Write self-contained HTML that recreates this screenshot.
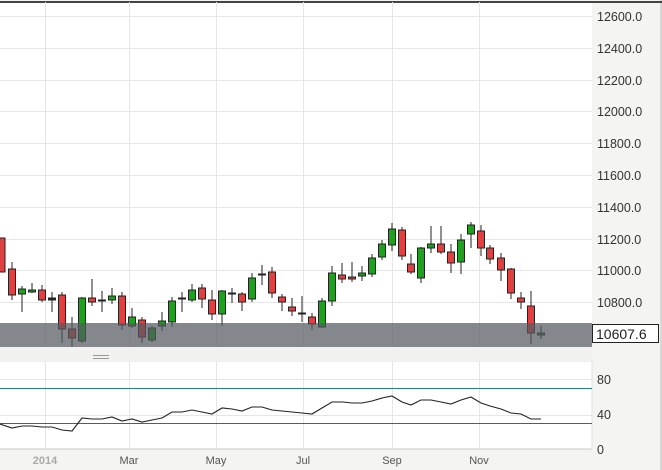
<!DOCTYPE html><html><head><meta charset="utf-8"><style>
html,body{margin:0;padding:0;background:#f4f4f2;width:662px;height:470px;overflow:hidden;font-family:"Liberation Sans",sans-serif}
svg{display:block}
</style></head><body>
<svg width="662" height="470" xmlns="http://www.w3.org/2000/svg" font-family="Liberation Sans, sans-serif">
<rect x="0" y="0" width="662" height="470" fill="#f4f4f2"/>
<rect x="660" y="0" width="2" height="470" fill="#d8d8d6"/>
<rect x="0" y="2" width="592" height="345" fill="#fff"/>
<rect x="0" y="1" width="662" height="2" fill="#444"/>
<rect x="0" y="361" width="592" height="88" fill="#fff"/>
<line x1="0" y1="449" x2="592" y2="449" stroke="#c8c8c8"/>
<line x1="0" y1="361" x2="592" y2="361" stroke="#e2e2e2"/>
<line x1="592" y1="361" x2="592" y2="449" stroke="#e2e2e2"/>
<g stroke="#e6e6e6" stroke-width="1">
<line x1="0" y1="16.5" x2="592" y2="16.5"/><line x1="0" y1="48.5" x2="592" y2="48.5"/><line x1="0" y1="80.5" x2="592" y2="80.5"/><line x1="0" y1="111.5" x2="592" y2="111.5"/><line x1="0" y1="143.5" x2="592" y2="143.5"/><line x1="0" y1="175.5" x2="592" y2="175.5"/><line x1="0" y1="207.5" x2="592" y2="207.5"/><line x1="0" y1="239.5" x2="592" y2="239.5"/><line x1="0" y1="270.5" x2="592" y2="270.5"/><line x1="0" y1="302.5" x2="592" y2="302.5"/>
<line x1="0" y1="415.5" x2="592" y2="415.5"/><line x1="0" y1="379.5" x2="592" y2="379.5"/>
<line x1="45.5" y1="2" x2="45.5" y2="347"/><line x1="129.5" y1="2" x2="129.5" y2="347"/><line x1="216.5" y1="2" x2="216.5" y2="347"/><line x1="303.5" y1="2" x2="303.5" y2="347"/><line x1="392.5" y1="2" x2="392.5" y2="347"/><line x1="479.5" y1="2" x2="479.5" y2="347"/>
<line x1="45.5" y1="361" x2="45.5" y2="449"/><line x1="129.5" y1="361" x2="129.5" y2="449"/><line x1="216.5" y1="361" x2="216.5" y2="449"/><line x1="303.5" y1="361" x2="303.5" y2="449"/><line x1="392.5" y1="361" x2="392.5" y2="449"/><line x1="479.5" y1="361" x2="479.5" y2="449"/>
</g>
<g stroke="#222" stroke-width="1">
<line x1="12" y1="262" x2="12" y2="300"/><line x1="22" y1="286" x2="22" y2="312"/><line x1="32" y1="283" x2="32" y2="293"/><line x1="42" y1="285" x2="42" y2="302"/><line x1="52" y1="292" x2="52" y2="312"/><line x1="62" y1="292" x2="62" y2="343"/><line x1="72" y1="317" x2="72" y2="351"/><line x1="82" y1="297" x2="82" y2="343"/><line x1="92" y1="279" x2="92" y2="306"/><line x1="102" y1="291" x2="102" y2="312"/><line x1="112" y1="288" x2="112" y2="304"/><line x1="122" y1="292" x2="122" y2="330"/><line x1="132" y1="308" x2="132" y2="328"/><line x1="142" y1="317" x2="142" y2="343"/><line x1="152" y1="326" x2="152" y2="342"/><line x1="162" y1="312" x2="162" y2="331"/><line x1="172" y1="297" x2="172" y2="327"/><line x1="182" y1="292" x2="182" y2="312"/><line x1="192" y1="284" x2="192" y2="302"/><line x1="202" y1="284" x2="202" y2="308"/><line x1="212" y1="290" x2="212" y2="320"/><line x1="222" y1="290" x2="222" y2="326"/><line x1="232" y1="288" x2="232" y2="303"/><line x1="242" y1="292" x2="242" y2="311"/><line x1="252" y1="273" x2="252" y2="302"/><line x1="262" y1="265" x2="262" y2="285"/><line x1="272" y1="267" x2="272" y2="298"/><line x1="282" y1="294" x2="282" y2="311"/><line x1="292" y1="298" x2="292" y2="316"/><line x1="302" y1="296" x2="302" y2="322"/><line x1="312" y1="313" x2="312" y2="330"/><line x1="322" y1="298" x2="322" y2="328"/><line x1="332" y1="266" x2="332" y2="306"/><line x1="342" y1="263" x2="342" y2="283"/><line x1="352" y1="262" x2="352" y2="282"/><line x1="362" y1="266" x2="362" y2="281"/><line x1="372" y1="254" x2="372" y2="277"/><line x1="382" y1="240" x2="382" y2="260"/><line x1="392" y1="223" x2="392" y2="251"/><line x1="402" y1="227" x2="402" y2="260"/><line x1="411" y1="254" x2="411" y2="274"/><line x1="421" y1="247" x2="421" y2="283"/><line x1="431" y1="226" x2="431" y2="253"/><line x1="441" y1="226" x2="441" y2="254"/><line x1="451" y1="244" x2="451" y2="273"/><line x1="461" y1="234" x2="461" y2="274"/><line x1="471" y1="222" x2="471" y2="248"/><line x1="481" y1="225" x2="481" y2="256"/><line x1="490" y1="245" x2="490" y2="264"/><line x1="501" y1="253" x2="501" y2="281"/><line x1="511" y1="268" x2="511" y2="299"/><line x1="521" y1="292" x2="521" y2="309"/><line x1="531" y1="291" x2="531" y2="344"/><line x1="541" y1="326" x2="541" y2="339"/>
</g>
<g stroke="#222" stroke-width="1">
<rect x="-2" y="238" width="7" height="34" fill="#e04040"/>
<rect x="8.5" y="269" width="7" height="26" fill="#e04040"/>
<rect x="18.5" y="289" width="7" height="5" fill="#1fa01f"/>
<rect x="28.5" y="290" width="7" height="2" fill="#1fa01f"/>
<rect x="38.5" y="290" width="7" height="10" fill="#e04040"/>
<rect x="48.5" y="298" width="7" height="2" fill="#222"/>
<rect x="58.5" y="295" width="7" height="34" fill="#e04040"/>
<rect x="68.5" y="329" width="7" height="9" fill="#e04040"/>
<rect x="78.5" y="298" width="7" height="43" fill="#1fa01f"/>
<rect x="88.5" y="298" width="7" height="4" fill="#e04040"/>
<rect x="98.5" y="300" width="7" height="1" fill="#222"/>
<rect x="108.5" y="296" width="7" height="4" fill="#1fa01f"/>
<rect x="118.5" y="296" width="7" height="29" fill="#e04040"/>
<rect x="128.5" y="317" width="7" height="9" fill="#1fa01f"/>
<rect x="138.5" y="320" width="7" height="17" fill="#e04040"/>
<rect x="148.5" y="328" width="7" height="12" fill="#1fa01f"/>
<rect x="158.5" y="321" width="7" height="5" fill="#1fa01f"/>
<rect x="168.5" y="301" width="7" height="21" fill="#1fa01f"/>
<rect x="178.5" y="298" width="7" height="1" fill="#222"/>
<rect x="188.5" y="290" width="7" height="10" fill="#1fa01f"/>
<rect x="198.5" y="288" width="7" height="11" fill="#e04040"/>
<rect x="208.5" y="300" width="7" height="14" fill="#e04040"/>
<rect x="218.5" y="291" width="7" height="23" fill="#1fa01f"/>
<rect x="228.5" y="293" width="7" height="1" fill="#222"/>
<rect x="238.5" y="294" width="7" height="8" fill="#e04040"/>
<rect x="248.5" y="278" width="7" height="21" fill="#1fa01f"/>
<rect x="258.5" y="274" width="7" height="1" fill="#222"/>
<rect x="268.5" y="272" width="7" height="21" fill="#e04040"/>
<rect x="278.5" y="297" width="7" height="5" fill="#e04040"/>
<rect x="288.5" y="307" width="7" height="4" fill="#e04040"/>
<rect x="298.5" y="313" width="7" height="1" fill="#e04040"/>
<rect x="308.5" y="317" width="7" height="7" fill="#e04040"/>
<rect x="318.5" y="301" width="7" height="26" fill="#1fa01f"/>
<rect x="328.5" y="273" width="7" height="28" fill="#1fa01f"/>
<rect x="338.5" y="275" width="7" height="4" fill="#e04040"/>
<rect x="348.5" y="277" width="7" height="2" fill="#e04040"/>
<rect x="358.5" y="273" width="7" height="3" fill="#1fa01f"/>
<rect x="368.5" y="258" width="7" height="16" fill="#1fa01f"/>
<rect x="378.5" y="244" width="7" height="13" fill="#1fa01f"/>
<rect x="388.5" y="229" width="7" height="16" fill="#1fa01f"/>
<rect x="398.5" y="230" width="7" height="26" fill="#e04040"/>
<rect x="407.5" y="264" width="7" height="8" fill="#e04040"/>
<rect x="417.5" y="248" width="7" height="30" fill="#1fa01f"/>
<rect x="427.5" y="244" width="7" height="4" fill="#1fa01f"/>
<rect x="437.5" y="244" width="7" height="8" fill="#e04040"/>
<rect x="447.5" y="252" width="7" height="11" fill="#e04040"/>
<rect x="457.5" y="240" width="7" height="22" fill="#1fa01f"/>
<rect x="467.5" y="225" width="7" height="9" fill="#1fa01f"/>
<rect x="477.5" y="231" width="7" height="17" fill="#e04040"/>
<rect x="486.5" y="248" width="7" height="11" fill="#e04040"/>
<rect x="497.5" y="258" width="7" height="12" fill="#e04040"/>
<rect x="507.5" y="269" width="7" height="24" fill="#e04040"/>
<rect x="517.5" y="298" width="7" height="4" fill="#e04040"/>
<rect x="527.5" y="306" width="7" height="27" fill="#e04040"/>
<rect x="537.5" y="333" width="7" height="2" fill="#1fa01f"/>
</g>
<rect x="0" y="323" width="592" height="24" fill="rgba(85,90,95,0.72)"/>
<rect x="0" y="347" width="592" height="14" fill="#f1f1ef"/>
<g stroke="#999"><line x1="93" y1="355.5" x2="109" y2="355.5"/><line x1="93" y1="358.5" x2="109" y2="358.5"/></g>
<line x1="0" y1="388.5" x2="592" y2="388.5" stroke="#2a7a80"/>
<line x1="0" y1="423.5" x2="592" y2="423.5" stroke="#c03030"/>
<polyline fill="none" stroke="#222" stroke-width="1.1" points="0,424 12,428 22,426 32,426 42,427 52,427 62,430 72,431 82,418 92,419 102,419 112,417 122,421 132,419 142,422 152,420 162,418 172,412 182,412 192,410 202,412 212,414 222,408 232,409 242,411 252,407 262,407 272,410 282,411 292,412 302,413 312,414 322,408 332,402 343,402 352,403 362,403 372,401 382,398 392,396 402,402 411,405 421,400 431,400 441,402 451,404 461,400 471,397 481,403 490,406 501,409 511,413 521,414 531,419 541,419"/>
<g font-size="12.5" fill="#333">
<text x="597" y="21">12600.0</text><text x="597" y="53">12400.0</text><text x="597" y="85">12200.0</text><text x="597" y="116">12000.0</text><text x="597" y="148">11800.0</text><text x="597" y="180">11600.0</text><text x="597" y="212">11400.0</text><text x="597" y="244">11200.0</text><text x="597" y="275">11000.0</text><text x="597" y="307">10800.0</text>
<text x="597" y="384">80</text><text x="597" y="419">40</text><text x="597" y="454">0</text>
</g>
<rect x="592.5" y="324.5" width="66" height="18" fill="#fff" stroke="#222"/>
<text x="596" y="339" font-size="14" fill="#222">10607.6</text>
<g font-size="11" fill="#555" text-anchor="middle">
<text x="45" y="464" font-weight="bold" fill="#aaa">2014</text><text x="129" y="464">Mar</text><text x="216" y="464">May</text><text x="303" y="464">Jul</text><text x="392" y="464">Sep</text><text x="479" y="464">Nov</text>
</g>
</svg>
</body></html>
